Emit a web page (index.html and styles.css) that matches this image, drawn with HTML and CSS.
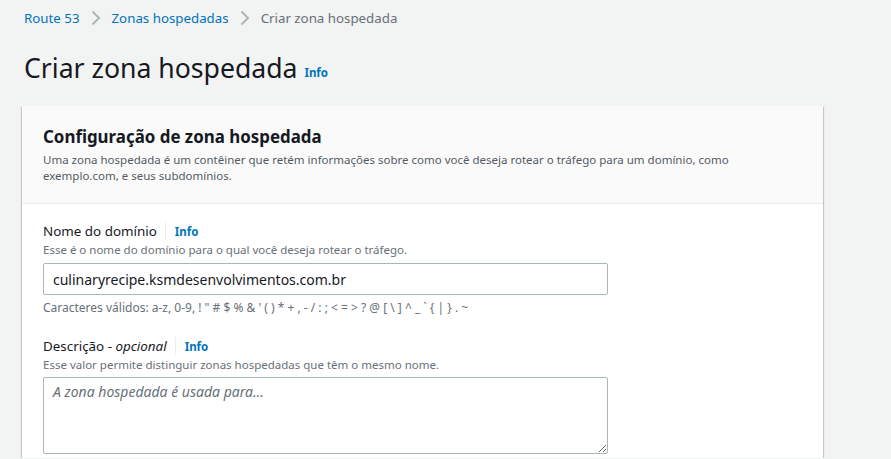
FILE: index.html
```html
<!DOCTYPE html>
<html lang="pt-BR">
<head>
<meta charset="utf-8">
<link rel="stylesheet" href="styles.css">
</head>
<body>
<div class="page">
  <nav class="breadcrumbs">
    <a class="crumb-link">Route 53</a>
    <svg class="chev" width="10" height="16" viewBox="0 0 10 16"><path d="M1.5 1.5 L8 8 L1.5 14.5" fill="none" stroke="#aab7b8" stroke-width="2"/></svg>
    <a class="crumb-link">Zonas hospedadas</a>
    <svg class="chev" width="10" height="16" viewBox="0 0 10 16"><path d="M1.5 1.5 L8 8 L1.5 14.5" fill="none" stroke="#aab7b8" stroke-width="2"/></svg>
    <span class="crumb-current">Criar zona hospedada</span>
  </nav>
  <h1 class="page-title">Criar zona hospedada <a class="info">Info</a></h1>

  <section class="card">
    <header class="card-header">
      <h2 class="card-title">Configuração de zona hospedada</h2>
      <p class="card-desc">Uma zona hospedada é um contêiner que retém informações sobre como você deseja rotear o tráfego para um domínio, como exemplo.com, e seus subdomínios.</p>
    </header>
    <div class="card-body">
      <div class="field">
        <div class="label-row"><span class="label">Nome do domínio</span><span class="sep"></span><a class="info">Info</a></div>
        <p class="hint">Esse é o nome do domínio para o qual você deseja rotear o tráfego.</p>
        <input class="text-input" type="text" value="culinaryrecipe.ksmdesenvolvimentos.com.br">
        <p class="constraint">Caracteres válidos: a-z, 0-9, ! " # $ % &amp; ' ( ) * + , - / : ; &lt; = &gt; ? @ [ \ ] ^ _ ` { | } . ~</p>
      </div>
      <div class="field field-desc">
        <div class="label-row"><span class="label">Descrição - <i>opcional</i></span><span class="sep"></span><a class="info">Info</a></div>
        <p class="hint">Esse valor permite distinguir zonas hospedadas que têm o mesmo nome.</p>
        <textarea class="text-area" placeholder="A zona hospedada é usada para…"></textarea>
      </div>
    </div>
  </section>
</div>
</body>
</html>
```
FILE: styles.css
```css
* { box-sizing: border-box; }
html, body { margin: 0; padding: 0; }
body {
  background: #f2f3f3;
  font-family: "Noto Sans", "Open Sans", sans-serif;
  color: #16191f;
  overflow: hidden;
}
.page { padding: 0 0 0 22px; }
.breadcrumbs {
  display: flex;
  align-items: center;
  height: 36px;
  padding-left: 2px;
  font-size: 13.3px;
  gap: 11px;
}
.crumb-link { color: #0073bb; }
.crumb-current { color: #687078; }
.page-title {
  margin: 12px 0 0 2px;
  font-size: 26.6px;
  font-weight: 400;
  line-height: 40px;
  height: 58px;
}
.page-title .info { font-size: 11.5px; margin-left: 0; vertical-align: 1px; }
.info { color: #0073bb; font-weight: 700; font-size: 11.5px; }
.card {
  width: 801px;
  background: #fff;
  box-shadow: 0 1px 1px 0 rgba(0,28,36,.3), 1px 1px 1px 0 rgba(0,28,36,.15), -1px 1px 1px 0 rgba(0,28,36,.15);
}
.card-header {
  background: #fafafa;
  border-bottom: 1px solid #eaeded;
  padding: 19px 20px 19px 21px;
}
.card-title { margin: 0; font-size: 16.9px; line-height: 24px; font-weight: 700; }
.card-desc { margin: 3px 0 0; font-size: 11.5px; line-height: 16px; color: #545b64; max-width: 700px; }
.card-body { padding: 16px 20px 4px 21px; }
.label-row { display: flex; align-items: center; height: 22px; }
.label { font-size: 13.4px; color: #16191f; }
.sep { width: 1px; height: 18px; background: #eaeded; margin: 0 9px 0 8px; }
.hint { margin: 0; font-size: 11.5px; line-height: 16px; color: #687078; }
.text-input {
  display: block;
  margin-top: 5px;
  width: 565px;
  height: 32px;
  border: 1px solid #aab7b8;
  border-radius: 2px;
  padding: 4px 9px;
  font: 14px "Noto Sans", "Open Sans", sans-serif;
  color: #16191f;
}
.constraint { margin: 5px 0 0; font-size: 12px; line-height: 16px; color: #687078; }
.field-desc { margin-top: 19px; }
.text-area {
  display: block;
  margin-top: 4px;
  width: 565px;
  height: 77px;
  border: 1px solid #aab7b8;
  border-radius: 2px;
  padding: 4px 9px;
  font: italic 14px "Noto Sans", "Open Sans", sans-serif;
  resize: vertical;
}
.text-area::placeholder { color: #687078; font-style: italic; }
```
